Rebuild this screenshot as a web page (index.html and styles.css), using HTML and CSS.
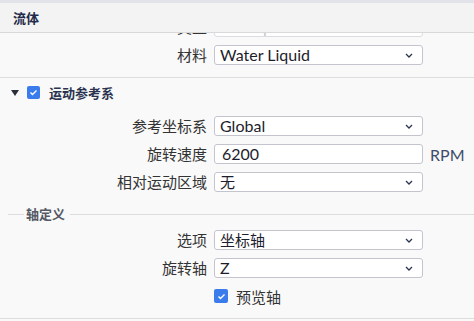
FILE: index.html
```html
<!DOCTYPE html>
<html lang="zh">
<head>
<meta charset="utf-8">
<link rel="stylesheet" href="styles.css">
</head>
<body>
<div class="topbar"></div>
<div class="panel-header">流体</div>

<div class="section s1">
  <div class="rows shifted">
    <div class="row">
      <span class="label">类型</span>
      <div class="select disabled"><span>Incompressible</span>
        <svg class="chev" width="8" height="5" viewBox="0 0 8 5"><polyline points="1,1 4,4 7,1" fill="none" stroke="#aab" stroke-width="1.3"/></svg>
      </div>
    </div>
    <div class="row">
      <span class="label">材料</span>
      <div class="select"><span>Water Liquid</span>
        <svg class="chev" width="8" height="5" viewBox="0 0 8 5"><polyline points="1,1 4,4 7,1" fill="none" stroke="#2c3550" stroke-width="1.3"/></svg>
      </div>
    </div>
  </div>
</div>

<div class="section s2">
  <div class="sec-title">
    <span class="tri"></span>
    <span class="cb"><svg width="9" height="7" viewBox="0 0 9 7"><polyline points="1.5,3.5 3.5,5.5 7.5,1.5" fill="none" stroke="#fff" stroke-width="1.4"/></svg></span>
    <span class="sec-text">运动参考系</span>
  </div>
  <div class="rows">
    <div class="row">
      <span class="label">参考坐标系</span>
      <div class="select"><span>Global</span>
        <svg class="chev" width="8" height="5" viewBox="0 0 8 5"><polyline points="1,1 4,4 7,1" fill="none" stroke="#2c3550" stroke-width="1.3"/></svg>
      </div>
    </div>
    <div class="row">
      <span class="label">旋转速度</span>
      <div class="select input"><span>6200</span></div>
      <span class="unit">RPM</span>
    </div>
    <div class="row">
      <span class="label">相对运动区域</span>
      <div class="select"><span class="cjk">无</span>
        <svg class="chev" width="8" height="5" viewBox="0 0 8 5"><polyline points="1,1 4,4 7,1" fill="none" stroke="#2c3550" stroke-width="1.3"/></svg>
      </div>
    </div>
  </div>
  <div class="legend">
    <span class="lline short"></span>
    <span class="legend-text">轴定义</span>
    <span class="lline"></span>
  </div>
  <div class="rows">
    <div class="row">
      <span class="label">选项</span>
      <div class="select"><span class="cjk">坐标轴</span>
        <svg class="chev" width="8" height="5" viewBox="0 0 8 5"><polyline points="1,1 4,4 7,1" fill="none" stroke="#2c3550" stroke-width="1.3"/></svg>
      </div>
    </div>
    <div class="row">
      <span class="label">旋转轴</span>
      <div class="select"><span>Z</span>
        <svg class="chev" width="8" height="5" viewBox="0 0 8 5"><polyline points="1,1 4,4 7,1" fill="none" stroke="#2c3550" stroke-width="1.3"/></svg>
      </div>
    </div>
    <div class="row">
      <span class="label"></span>
      <label class="check">
        <span class="cb big"><svg width="9" height="7" viewBox="0 0 9 7"><polyline points="1.5,3.5 3.5,5.5 7.5,1.5" fill="none" stroke="#fff" stroke-width="1.4"/></svg></span>
        <span class="check-text">预览轴</span>
      </label>
    </div>
  </div>
</div>
</body>
</html>
```

FILE: styles.css
```css
* { box-sizing: border-box; }

html, body {
  margin: 0;
  padding: 0;
}

body {
  width: 474px;
  height: 321px;
  overflow: hidden;
  background: #f9f9f9;
  font-family: "Noto Sans CJK SC", "Noto Sans", sans-serif;
  color: #333;
}

.topbar {
  height: 3px;
  background: #e2e3e8;
}

.panel-header {
  height: 30px;
  background: #f3f3f3;
  border-bottom: 1px solid #d9d9d9;
  padding-left: 13px;
  display: flex;
  align-items: center;
  font-size: 13px;
  font-weight: 700;
  color: #1e2a47;
}

.section {
  border-bottom: 1px solid #dedede;
  padding-bottom: 8px;
}

.s1 {
  height: 45px;
  overflow: hidden;
}

.shifted {
  margin-top: -20px;
}

.row {
  height: 28px;
  display: grid;
  grid-template-columns: 207px 209px auto;
  column-gap: 7px;
  align-items: center;
}

.label {
  text-align: right;
  font-size: 15px;
  color: #333;
  line-height: 20px;
}

.select {
  height: 20px;
  background: #fff;
  border: 1px solid #c4c4cf;
  border-radius: 3px;
  display: flex;
  align-items: center;
  justify-content: space-between;
  padding: 0 9px 0 5px;
  font-family: "Lato", "Noto Sans CJK SC", sans-serif;
  font-size: 16px;
  color: #1d1d2c;
  line-height: 18px;
}

.select .cjk {
  font-family: "Noto Sans CJK SC", sans-serif;
  font-size: 15px;
}

.select.input {
  padding-left: 7px;
}

.select.disabled {
  color: #c4c4cc;
  border-color: #dcdce2;
}

.chev {
  display: block;
}

.unit {
  font-family: "Lato", sans-serif;
  font-size: 16px;
  color: #3e4d6b;
}

.s2 {
  padding-bottom: 8px;
}

.sec-title {
  height: 34px;
  display: flex;
  align-items: flex-start;
  padding-top: 8px;
  padding-left: 11px;
}

.tri {
  width: 0;
  height: 0;
  margin-top: 4px;
  border-left: 4px solid transparent;
  border-right: 4px solid transparent;
  border-top: 6px solid #2b2f3a;
}

.cb {
  width: 13px;
  height: 13px;
  border-radius: 2px;
  background: #3b7ced;
  display: flex;
  align-items: center;
  justify-content: center;
  margin-left: 8px;
}

.cb.big {
  width: 14px;
  height: 14px;
  margin-left: 0;
}

.sec-text {
  margin-left: 9px;
  font-size: 13px;
  font-weight: 700;
  color: #2a3350;
  line-height: 13px;
}

.legend {
  height: 30px;
  display: flex;
  align-items: center;
  padding-top: 6px;
  padding-left: 8px;
}

.lline {
  flex: 1;
  height: 1px;
  background: #dcdcdc;
}

.lline.short {
  flex: 0 0 16px;
}

.legend-text {
  padding: 0 5px 0 2px;
  font-size: 13px;
  font-weight: 700;
  color: #555a66;
  line-height: 14px;
}

.check {
  display: flex;
  align-items: center;
  gap: 8px;
}

.check-text {
  font-size: 15px;
  color: #333;
}
```
